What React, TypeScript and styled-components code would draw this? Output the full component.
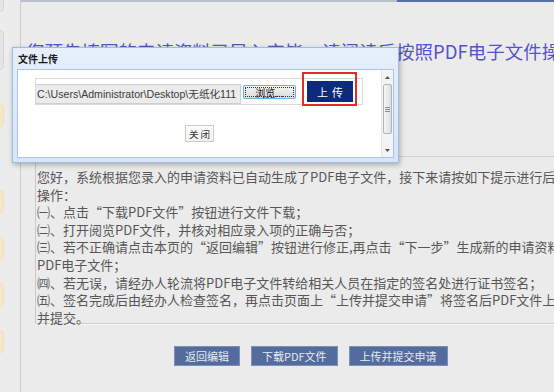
import React from "react";
import styled, {createGlobalStyle} from "styled-components";

const GlobalStyle = createGlobalStyle`
  html, body {
    margin: 0;
    padding: 0;
    background: #ebebeb;
    overflow: hidden;
  }
  body {
    font-family: "Noto Sans CJK SC", "Liberation Sans", sans-serif;
  }
`;

const CJK = `"Noto Sans CJK SC", "Liberation Sans", sans-serif`;

export const Page = styled.div`
  position: relative;
  display: flex;
  width: 554px;
  height: 392px;
  overflow: hidden;
  background: #ebebeb;
`;

// left side strip with the half hidden tabs
export const Sidebar = styled.div`
  width: 20px;
  flex: none;
  border-right: 1px solid #cdcdcd;
  display: flex;
  flex-direction: column;
  background: #ececec;
`;
export const SideTab = styled.div<{$tone: "gray" | "yellow"; $top: number; $h: number}>`
  width: 12px;
  height: ${p => p.$h}px;
  margin-top: ${p => p.$top}px;
  margin-left: -8px;
  border-radius: 4px;
  box-sizing: border-box;
  background: ${p => (p.$tone === "gray" ? "#e5e5e5" : "#f4e8c8")};
  border: 1px solid ${p => (p.$tone === "gray" ? "#d6d6d6" : "#efe0b8")};
`;

export const Main = styled.div`
  flex: 1;
  min-width: 0;
  display: flex;
  flex-direction: column;
`;
export const TopRule = styled.div`
  display: flex;
  height: 2px;
`;
export const RulePart = styled.div<{$active?: boolean}>`
  height: 100%;
  flex: ${p => (p.$active ? "0 0 157px" : "1")};
  background: ${p => (p.$active ? "#5a6ea6" : "#b9c0cc")};
`;
export const Title = styled.div`
  margin-top: 37px;
  padding-left: 5px;
  height: 24px;
  line-height: 24px;
  font-family: ${CJK};
  font-size: 18.5px;
  color: #5353cc;
  white-space: nowrap;
`;
export const Notice = styled.div`
  margin-top: 93px;
  margin-left: 14px;
  height: 168px;
  box-sizing: border-box;
  padding-top: 11px;
  padding-left: 1px;
  border-top: 1px solid #d2d2d2;
  border-left: 1px solid #c9c9c9;
  border-bottom: 1px solid #cfcfcf;
  box-shadow: 0 1px 0 #f6f6f6;
  font-family: ${CJK};
  font-size: 13px;
  line-height: 17.6px;
  color: #575757;
`;
export const NoticeLine = styled.div`
  white-space: nowrap;
`;
export const Actions = styled.div`
  display: flex;
  margin-top: 22px;
  padding-left: 153px;
  gap: 11px;
`;
export const ActionBtn = styled.button`
  height: 20px;
  padding: 0 10px;
  border: 1px solid #7d90ba;
  background: #546b9d;
  color: #e6eaf3;
  font-family: ${CJK};
  font-size: 11px;
  line-height: 18px;
  cursor: pointer;
`;

// popup window "文件上传"
export const Dialog = styled.div`
  position: absolute;
  left: 12px;
  top: 47px;
  width: 387px;
  height: 116px;
  box-sizing: border-box;
  padding: 0 4px 4px;
  border: 1px solid #9fbde4;
  background: linear-gradient(#e6effb, #d6e5f7);
  box-shadow: 1px 2px 5px rgba(0, 0, 0, 0.28);
  display: flex;
  flex-direction: column;
`;
export const DialogTitle = styled.div`
  height: 21px;
  line-height: 21px;
  padding-left: 1px;
  font-family: ${CJK};
  font-size: 10px;
  font-weight: bold;
  color: #1a1a1a;
`;
export const DialogBody = styled.div`
  flex: 1;
  display: flex;
  background: #ffffff;
  border: 1px solid #a9c5ea;
`;
export const DialogContent = styled.div`
  flex: 1;
  display: flex;
  flex-direction: column;
`;
export const FileBox = styled.div`
  margin: 8px 0 0 17px;
  width: 328px;
  height: 27px;
  box-sizing: border-box;
  padding-top: 5px;
  border: 1px solid #d9d9d9;
  border-bottom-color: #dcdcdc;
  display: flex;
  align-items: flex-start;
`;
export const PathInput = styled.div`
  width: 205px;
  height: 20px;
  box-sizing: border-box;
  background: #ebebeb;
  border: 1px solid #cfcfcf;
  border-left: none;
  padding-left: 1px;
  font-family: "Liberation Sans", "Noto Sans CJK SC", sans-serif;
  font-size: 10.6px;
  line-height: 18px;
  color: #3c3c3c;
  white-space: nowrap;
  overflow: hidden;
`;
export const BrowseBtn = styled.button`
  margin: 1px 0 0 2px;
  width: 53px;
  height: 14px;
  padding: 0;
  border: 1px solid #6fb3df;
  border-radius: 2px;
  background: linear-gradient(#f3f3f3, #dcdcdc);
  outline: 1px dotted #333;
  outline-offset: -3px;
  font-family: ${CJK};
  font-size: 10px;
  line-height: 11px;
  color: #111;
  white-space: nowrap;
  overflow: visible;
`;
export const UploadWrap = styled.div`
  position: relative;
  margin: -3px 0 0 11px;
`;
export const UploadBtn = styled.button`
  display: block;
  width: 46px;
  height: 21px;
  padding: 0;
  border: none;
  background: #0c2b79;
  color: #ffffff;
  font-family: ${CJK};
  font-size: 11px;
  letter-spacing: 4px;
  text-indent: 4px;
`;
// red annotation frame drawn over the button
export const Highlight = styled.span`
  position: absolute;
  left: -5px;
  top: -9px;
  right: -4px;
  bottom: -4px;
  border: 2px solid #e22b2b;
  pointer-events: none;
`;
export const CloseBtn = styled.button`
  align-self: center;
  margin-top: 20px;
  width: 29px;
  height: 17px;
  padding: 0;
  border: 1px solid #cccccc;
  background: linear-gradient(#fdfdfd, #f0f0f0);
  font-family: ${CJK};
  font-size: 9.5px;
  color: #333;
  letter-spacing: 2px;
  text-indent: 2px;
`;

export const Scrollbar = styled.div`
  width: 11px;
  flex: none;
  display: flex;
  flex-direction: column;
  align-items: center;
  background: #f4f4f4;
  border-left: 1px solid #e6e6e6;
`;
export const Arrow = styled.div`
  height: 14px;
  display: flex;
  align-items: center;
  justify-content: center;
`;
export const Thumb = styled.div`
  width: 9px;
  height: 50px;
  box-sizing: border-box;
  border: 1px solid #b4b4b4;
  border-radius: 2px;
  background: linear-gradient(90deg, #f6f6f6, #dedede);
  display: flex;
  flex-direction: column;
  align-items: center;
  justify-content: center;
  gap: 1px;
`;
export const Grip = styled.span`
  width: 5px;
  height: 1px;
  background: #8a8a8a;
`;
export const ScrollSpace = styled.div`
  flex: 1;
`;

const sideTabs: {tone: "gray" | "yellow"; top: number; h: number}[] = [
  {tone: "gray", top: -10, h: 22},
  {tone: "gray", top: 18, h: 40},
  {tone: "yellow", top: 34, h: 23},
  {tone: "yellow", top: 63, h: 23},
  {tone: "yellow", top: 24, h: 23},
  {tone: "yellow", top: 23, h: 24},
  {tone: "yellow", top: 23, h: 23},
];

const lines = [
  "您好，系统根据您录入的申请资料已自动生成了PDF电子文件，接下来请按如下提示进行后续",
  "操作：",
  "㈠、点击“下载PDF文件”按钮进行文件下载；",
  "㈡、打开阅览PDF文件，并核对相应录入项的正确与否；",
  "㈢、若不正确请点击本页的“返回编辑”按钮进行修正,再点击“下一步”生成新的申请资料",
  "PDF电子文件；",
  "㈣、若无误，请经办人轮流将PDF电子文件转给相关人员在指定的签名处进行证书签名；",
  "㈤、签名完成后由经办人检查签名，再点击页面上“上传并提交申请”将签名后PDF文件上传",
  "并提交。",
];

const Tri = ({down}: {down?: boolean}) => (
  <svg width="5" height="3" viewBox="0 0 5 3">
    <polygon points={down ? "0,0 5,0 2.5,3" : "0,3 5,3 2.5,0"} fill="#555" />
  </svg>
);

const App = () => {
  return (
    <>
      <GlobalStyle />
      <Page>
        <Sidebar>
          {sideTabs.map((t, i) => (
            <SideTab key={i} $tone={t.tone} $top={t.top} $h={t.h} />
          ))}
        </Sidebar>
        <Main>
          <TopRule>
            <RulePart />
            <RulePart $active />
          </TopRule>
          <Title>您预先填写的申请资料已导入完毕，请阅读后按照PDF电子文件操作</Title>
          <Notice>
            {lines.map((l, i) => (
              <NoticeLine key={i}>{l}</NoticeLine>
            ))}
          </Notice>
          <Actions>
            <ActionBtn>返回编辑</ActionBtn>
            <ActionBtn>下载PDF文件</ActionBtn>
            <ActionBtn>上传并提交申请</ActionBtn>
          </Actions>
        </Main>

        <Dialog>
          <DialogTitle>文件上传</DialogTitle>
          <DialogBody>
            <DialogContent>
              <FileBox>
                <PathInput>C:\Users\Administrator\Desktop\无纸化111</PathInput>
                <BrowseBtn>浏览...</BrowseBtn>
                <UploadWrap>
                  <UploadBtn>上传</UploadBtn>
                  <Highlight />
                </UploadWrap>
              </FileBox>
              <CloseBtn>关闭</CloseBtn>
            </DialogContent>
            <Scrollbar>
              <Arrow><Tri /></Arrow>
              <Thumb>
                <Grip />
                <Grip />
                <Grip />
              </Thumb>
              <ScrollSpace />
              <Arrow><Tri down /></Arrow>
            </Scrollbar>
          </DialogBody>
        </Dialog>
      </Page>
    </>
  );
};

export default App;
